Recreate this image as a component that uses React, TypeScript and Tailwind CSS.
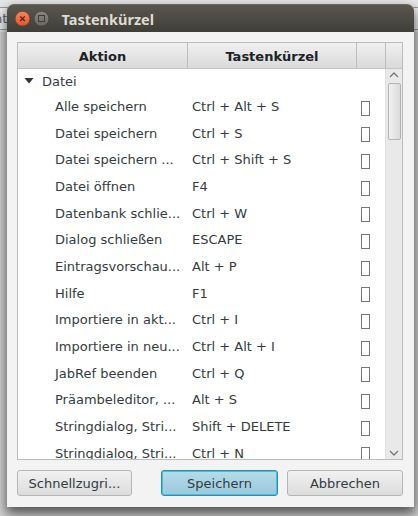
const rows: [string, string][] = [
  ['Alle speichern', 'Ctrl + Alt + S'],
  ['Datei speichern', 'Ctrl + S'],
  ['Datei speichern ...', 'Ctrl + Shift + S'],
  ['Datei öffnen', 'F4'],
  ['Datenbank schlie...', 'Ctrl + W'],
  ['Dialog schließen', 'ESCAPE'],
  ['Eintragsvorschau...', 'Alt + P'],
  ['Hilfe', 'F1'],
  ['Importiere in akt...', 'Ctrl + I'],
  ['Importiere in neu...', 'Ctrl + Alt + I'],
  ['JabRef beenden', 'Ctrl + Q'],
  ['Präambeleditor, ...', 'Alt + S'],
  ['Stringdialog, Stri...', 'Shift + DELETE'],
  ['Stringdialog, Stri...', 'Ctrl + N'],
];

function TitleBar() {
  return (
    <header className="flex h-[28px] shrink-0 items-center rounded-t-[7px] border-t border-[#6b695f] bg-linear-to-b from-[#59574e] to-[#3f3e39] pl-[8px]">
      <svg width="36" height="18" viewBox="0 0 36 18" className="mt-px shrink-0">
        <defs>
          <linearGradient id="close" x1="0" y1="0" x2="0" y2="1">
            <stop offset="0" stopColor="#f58662" />
            <stop offset="1" stopColor="#e5532a" />
          </linearGradient>
          <linearGradient id="max" x1="0" y1="0" x2="0" y2="1">
            <stop offset="0" stopColor="#8a8880" />
            <stop offset="1" stopColor="#68665f" />
          </linearGradient>
        </defs>
        <circle cx="7.5" cy="8.7" r="7.4" fill="url(#close)" stroke="#4a3a30" strokeWidth=".6" />
        <path d="M5.2 6.4l4.6 4.6M9.8 6.4L5.2 11" stroke="#4a241a" strokeWidth="1.2" />
        <circle cx="26.5" cy="8.7" r="7.4" fill="url(#max)" stroke="#38362f" strokeWidth=".6" />
        <rect x="23.5" y="5.5" width="6" height="6" fill="none" stroke="#3c3b36" />
      </svg>
      <h1 className="ml-[10.5px] font-['Noto_Sans',sans-serif] text-[14.5px] leading-[20px] font-bold text-[#dfdbd2]">
        Tastenkürzel
      </h1>
    </header>
  );
}

function Table() {
  return (
    <div className="flex h-[418px] w-[386px] shrink-0 flex-col border border-[#bcbcbc] bg-white">
      <div className="flex h-[26px] shrink-0 border-b border-[#c4c4c4] bg-linear-to-b from-[#f0f0f0] to-[#dadada] text-center text-[13px] leading-[27px] font-bold text-[#1c2226]">
        <div className="w-[170px] border-r border-[#bebebe]">Aktion</div>
        <div className="w-[169px] border-r border-[#bebebe]">Tastenkürzel</div>
        <div className="w-[29px] border-r border-[#bebebe]" />
      </div>
      <div className="flex min-h-0 flex-1">
        <div className="min-w-0 flex-1 overflow-hidden">
          <div className="flex h-[24.5px] items-center">
            <svg width="10" height="6" viewBox="0 0 10 6" className="ml-[6px]">
              <path d="M.5 0h9L5 5.6z" fill="#333" />
            </svg>
            <span className="ml-[8px]">Datei</span>
          </div>
          {rows.map(([action, key], i) => (
            <div key={i} className="flex h-[26.66px] items-center whitespace-nowrap">
              <span className="w-[137px] shrink-0 pl-[37px]">{action}</span>
              <span className="w-[169px] shrink-0 pl-[37px]">{key}</span>
              <span className="mt-[3px] ml-[37px] h-[15px] w-[9px] shrink-0 border border-[#777]" />
            </div>
          ))}
        </div>
        <div className="flex w-[17px] shrink-0 flex-col items-center border-l border-[#e0e0e0] bg-[#e9e9e9]">
          <svg width="10" height="14" viewBox="0 0 10 14" fill="none" stroke="#777" strokeWidth="1.3">
            <path d="M1 8l4-4 4 4" />
          </svg>
          <div className="h-[57px] w-[13px] rounded-[2px] border border-[#b4b4b4] bg-linear-to-r from-[#f1f1f1] to-[#dbdbdb]" />
          <svg width="10" height="14" viewBox="0 0 10 14" fill="none" stroke="#777" strokeWidth="1.3" className="mt-auto">
            <path d="M1 6l4 4 4-4" />
          </svg>
        </div>
      </div>
    </div>
  );
}

export default function App() {
  const button =
    'h-[26px] rounded-[3px] border border-[#b5b5b5] bg-linear-to-b from-[#f1f1f1] to-[#dcdcdc] text-center leading-[25px]';
  return (
    <div className="relative h-[516px] w-[418px] overflow-hidden bg-[#d2d2d2] font-['DejaVu_Sans',sans-serif] text-[13px] text-[#333b3f]">
      <div className="flex h-[32px] flex-col bg-[#e6e6e6] pt-[7px]">
        <div className="h-[23px] border-y border-[#999] bg-[#ededed] text-[13px] leading-[22px] text-[#666]">
          <span className="-ml-[6px]">nt</span>
        </div>
      </div>
      <main className="absolute top-[4px] left-[7px] flex h-[503px] w-[407px] flex-col rounded-t-[7px] bg-[#f3f3f3] shadow-[0_6px_12px_1px_rgba(0,0,0,0.6)]">
        <TitleBar />
        <div className="flex flex-col px-[10px] pt-[10px]">
          <Table />
          <div className="mt-[10px] flex w-[386px]">
            <button className={button + ' w-[115px]'}>Schnellzugri...</button>
            <button className="ml-[29px] h-[26px] w-[117px] rounded-[3px] border border-[#1b94be] bg-linear-to-b from-[#b5dcea] to-[#9ac9dd] text-center leading-[25px] shadow-[inset_0_0_0_1px_#5fb6d4]">
              Speichern
            </button>
            <button className={button + ' ml-[9px] w-[116px]'}>Abbrechen</button>
          </div>
        </div>
      </main>
    </div>
  );
}
